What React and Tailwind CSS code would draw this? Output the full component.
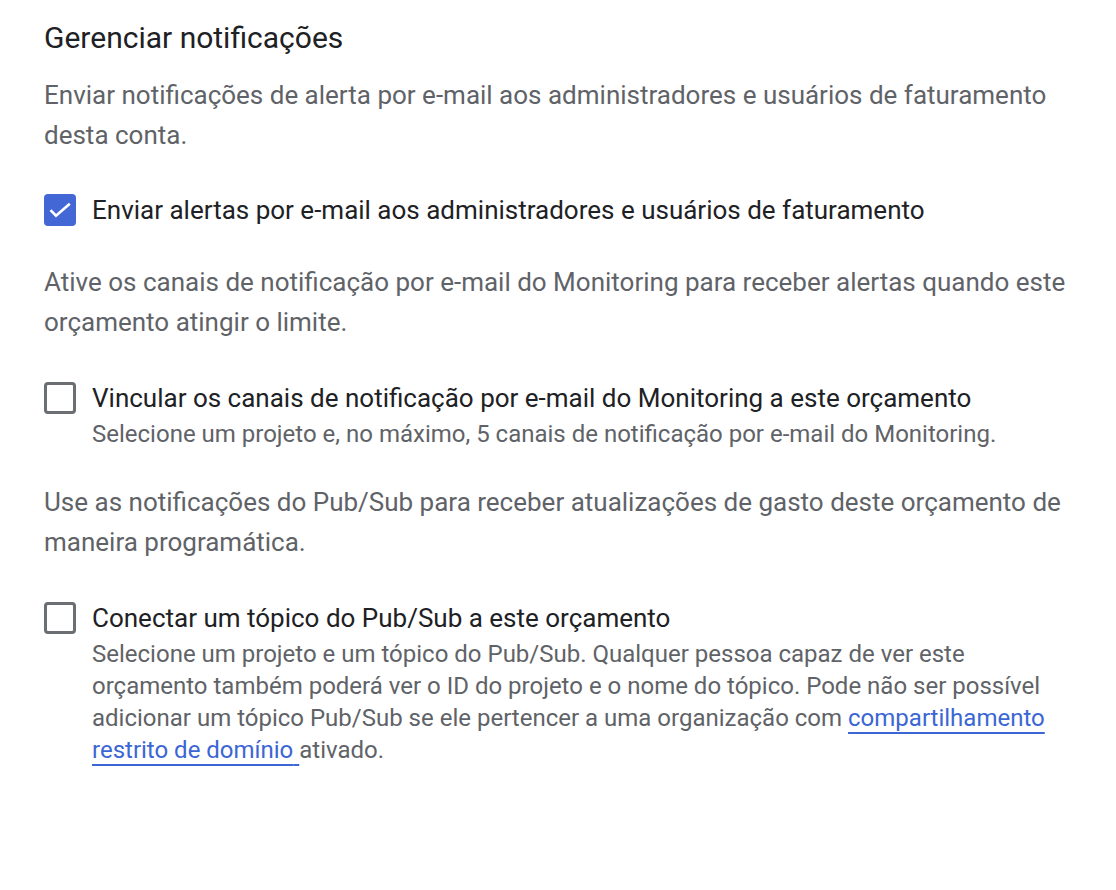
export default function App() {
  const font = { fontFamily: 'Roboto, "Noto Sans", Arial, sans-serif' };
  return (
    <div className="min-h-[890px] w-[1116px] bg-white" style={font}>
      <div className="pl-[44px] pr-[44px] pt-[18px]">
        <h2 className="text-[30px] leading-[40px] text-[#202124] font-normal">Gerenciar notificações</h2>
        <p className="mt-[17px] text-[26px] leading-[40px] text-[#5f6368]">
          Enviar notificações de alerta por e-mail aos administradores e usuários de faturamento desta conta.
        </p>

        <div className="mt-[35px] flex items-start gap-4">
          <div className="mt-1 h-8 w-8 shrink-0 rounded-[4px] bg-[#4368d6]">
            <svg width="32" height="32" viewBox="0 0 32 32" fill="none">
              <path d="M6.5 16.2L12 21.7L25.8 9.8" stroke="white" strokeWidth="2.6" strokeLinecap="butt" strokeLinejoin="miter" />
            </svg>
          </div>
          <div className="text-[26px] leading-[40px] text-[#202124]">
            Enviar alertas por e-mail aos administradores e usuários de faturamento
          </div>
        </div>

        <p className="mt-[32px] text-[26px] leading-[40px] text-[#5f6368]">
          Ative os canais de notificação por e-mail do Monitoring para receber alertas quando este orçamento atingir o limite.
        </p>

        <div className="mt-[36px] flex items-start gap-4">
          <div className="mt-1 h-8 w-8 shrink-0 rounded-[4px] border-[3px] border-[#6b6e72]" />
          <div>
            <div className="text-[26px] leading-[40px] text-[#202124]">
              Vincular os canais de notificação por e-mail do Monitoring a este orçamento
            </div>
            <div className="text-[24px] leading-[32px] text-[#5f6368]">
              Selecione um projeto e, no máximo, 5 canais de notificação por e-mail do Monitoring.
            </div>
          </div>
        </div>

        <p className="mt-[32px] text-[26px] leading-[40px] text-[#5f6368]">
          Use as notificações do Pub/Sub para receber atualizações de gasto deste orçamento de maneira programática.
        </p>

        <div className="mt-[36px] flex items-start gap-4">
          <div className="mt-1 h-8 w-8 shrink-0 rounded-[4px] border-[3px] border-[#6b6e72]" />
          <div>
            <div className="text-[26px] leading-[40px] text-[#202124]">
              Conectar um tópico do Pub/Sub a este orçamento
            </div>
            <div className="text-[24px] leading-[32px] text-[#5f6368]">
              Selecione um projeto e um tópico do Pub/Sub. Qualquer pessoa capaz de ver este orçamento também poderá ver o ID do projeto e o nome do tópico. Pode não ser possível adicionar um tópico Pub/Sub se ele pertencer a uma organização com{' '}
              <a href="#" className="text-[#3b66d4] underline decoration-2 underline-offset-[6px] decoration-[#3b66d4]">
                compartilhamento restrito de domínio{' '}
              </a>
              ativado.
            </div>
          </div>
        </div>
      </div>
    </div>
  );
}
